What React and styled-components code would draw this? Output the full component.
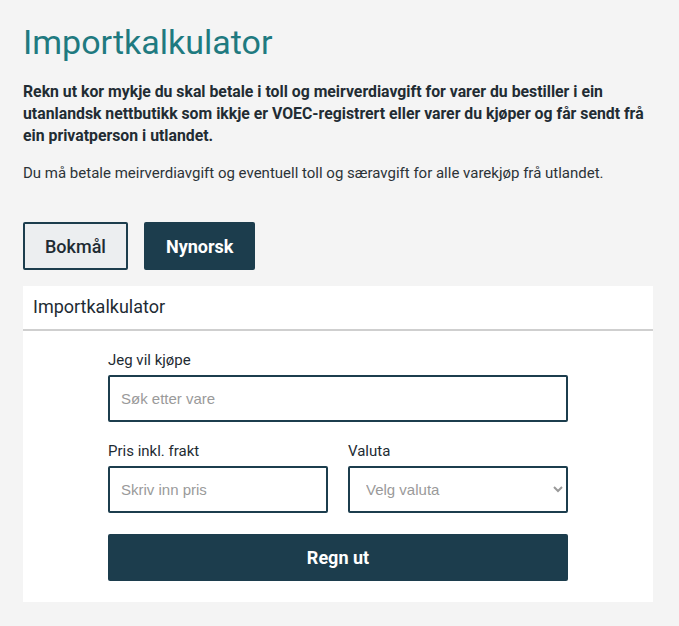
import styled, { createGlobalStyle } from 'styled-components'

const GlobalStyle = createGlobalStyle`
  html, body {
    margin: 0;
    background: #f4f4f4;
    font-family: Roboto, "Liberation Sans", sans-serif;
    color: #1e2b33;
  }
`

const Page = styled.div`
  width: 630px;
  padding: 20px 0 24px 23px;
`

const Title = styled.h1`
  margin: 0;
  font-size: 34px;
  font-weight: 400;
  line-height: 44px;
  color: #1f7a80;
`

const Lead = styled.p`
  margin: 17px 0 0;
  font-size: 15.8px;
  font-weight: 700;
  line-height: 22px;
  color: #222c33;
`

const Body = styled.p`
  margin: 15px 0 0;
  font-size: 15px;
  line-height: 22px;
  color: #2c3338;
`

const LangRow = styled.div`
  display: flex;
  gap: 16px;
  margin-top: 38px;
`

const LangButton = styled.button`
  height: 48px;
  padding: 0 20px;
  border: 2px solid #1c3d4d;
  border-radius: 2px;
  font-family: Roboto, "Liberation Sans", sans-serif;
  font-size: 18px;
  font-weight: ${p => (p.$active ? 700 : 500)};
  background: ${p => (p.$active ? '#1c3d4d' : '#eceef0')};
  color: ${p => (p.$active ? '#fff' : '#1e2b33')};
  cursor: pointer;
`

const Card = styled.section`
  margin-top: 16px;
  background: #fff;
`

const CardHeader = styled.h2`
  margin: 0;
  padding: 9px 10px 0;
  height: 34px;
  font-size: 18px;
  font-weight: 400;
  line-height: 24px;
  color: #1e2b33;
  border-bottom: 2px solid #cfcfcf;
`

const Form = styled.form`
  width: 460px;
  margin: 0 auto;
  padding: 20px 0 21px;
  display: flex;
  flex-direction: column;
  gap: 20px;
`

const Row = styled.div`
  display: grid;
  grid-template-columns: minmax(0, 1fr) minmax(0, 1fr);
  gap: 20px;
`

const Field = styled.label`
  display: flex;
  flex-direction: column;
  gap: 6px;
  font-size: 15px;
  line-height: 18px;
  color: #1e2b33;
`

const Input = styled.input`
  box-sizing: border-box;
  width: 100%;
  height: 47px;
  padding: 0 11px;
  border: 2px solid #1c3d4d;
  border-radius: 2px;
  font-family: "Liberation Sans", Arial, sans-serif;
  font-size: 15px;
  color: #1e2b33;
  background: #fff;
  &::placeholder {
    color: #9a9a9a;
  }
`

const Select = styled.select`
  box-sizing: border-box;
  width: 100%;
  height: 47px;
  padding: 0 8px 0 12px;
  border: 2px solid #1c3d4d;
  border-radius: 2px;
  font-family: "Liberation Sans", Arial, sans-serif;
  font-size: 15px;
  color: #9a9a9a;
  background: #fff;
`

const Submit = styled.button`
  height: 47px;
  margin-top: 1px;
  border: none;
  border-radius: 2px;
  background: #1c3d4d;
  color: #fff;
  font-family: Roboto, "Liberation Sans", sans-serif;
  font-size: 18px;
  font-weight: 700;
  cursor: pointer;
`

export default function App() {
  return (
    <>
      <GlobalStyle />
      <Page>
        <Title>Importkalkulator</Title>
        <Lead>
          Rekn ut kor mykje du skal betale i toll og meirverdiavgift for varer du bestiller i ein
          utanlandsk nettbutikk som ikkje er VOEC-registrert eller varer du kjøper og får sendt frå
          ein privatperson i utlandet.
        </Lead>
        <Body>Du må betale meirverdiavgift og eventuell toll og særavgift for alle varekjøp frå utlandet.</Body>
        <LangRow>
          <LangButton>Bokmål</LangButton>
          <LangButton $active>Nynorsk</LangButton>
        </LangRow>
        <Card>
          <CardHeader>Importkalkulator</CardHeader>
          <Form onSubmit={e => e.preventDefault()}>
            <Field>
              Jeg vil kjøpe
              <Input placeholder="Søk etter vare" />
            </Field>
            <Row>
              <Field>
                Pris inkl. frakt
                <Input placeholder="Skriv inn pris" />
              </Field>
              <Field>
                Valuta
                <Select defaultValue="">
                  <option value="" disabled>Velg valuta</option>
                  <option value="EUR">EUR</option>
                  <option value="USD">USD</option>
                </Select>
              </Field>
            </Row>
            <Submit type="submit">Regn ut</Submit>
          </Form>
        </Card>
      </Page>
    </>
  )
}
